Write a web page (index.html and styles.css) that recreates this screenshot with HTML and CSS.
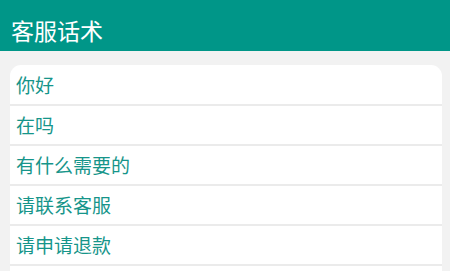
FILE: index.html
```html
<!DOCTYPE html>
<html lang="zh">
<head>
<meta charset="utf-8">
<title>客服话术</title>
<link rel="stylesheet" href="styles.css">
</head>
<body>
<header class="bar"><h1 class="title">客服话术</h1></header>
<main class="content">
  <ul class="list">
    <li class="item">你好</li>
    <li class="item">在吗</li>
    <li class="item">有什么需要的</li>
    <li class="item">请联系客服</li>
    <li class="item">请申请退款</li>
    <li class="item item-empty"></li>
  </ul>
</main>
</body>
</html>
```
FILE: styles.css
```css
html, body {
  margin: 0;
  padding: 0;
  height: 100%;
  overflow: hidden;
}
body {
  background: #f2f2f2;
  font-family: "Noto Sans CJK SC", "Noto Sans", sans-serif;
}
.bar {
  height: 51px;
  background: #009688;
  box-sizing: border-box;
  padding: 15px 0 0 11px;
}
.title {
  margin: 0;
  font-size: 23px;
  line-height: 30px;
  font-weight: normal;
  color: #ffffff;
}
.content {
  padding: 14px 8px 0 10px;
}
.list {
  list-style: none;
  margin: 0;
  padding: 0;
  background: #ffffff;
  border-radius: 11px 11px 0 0;
  overflow: hidden;
}
.item {
  height: 38px;
  line-height: 38px;
  padding-left: 6px;
  font-size: 19px;
  color: #16958a;
  border-bottom: 2px solid #ebebeb;
}
.item:first-child {
  height: 39px;
  line-height: 39px;
}
```
